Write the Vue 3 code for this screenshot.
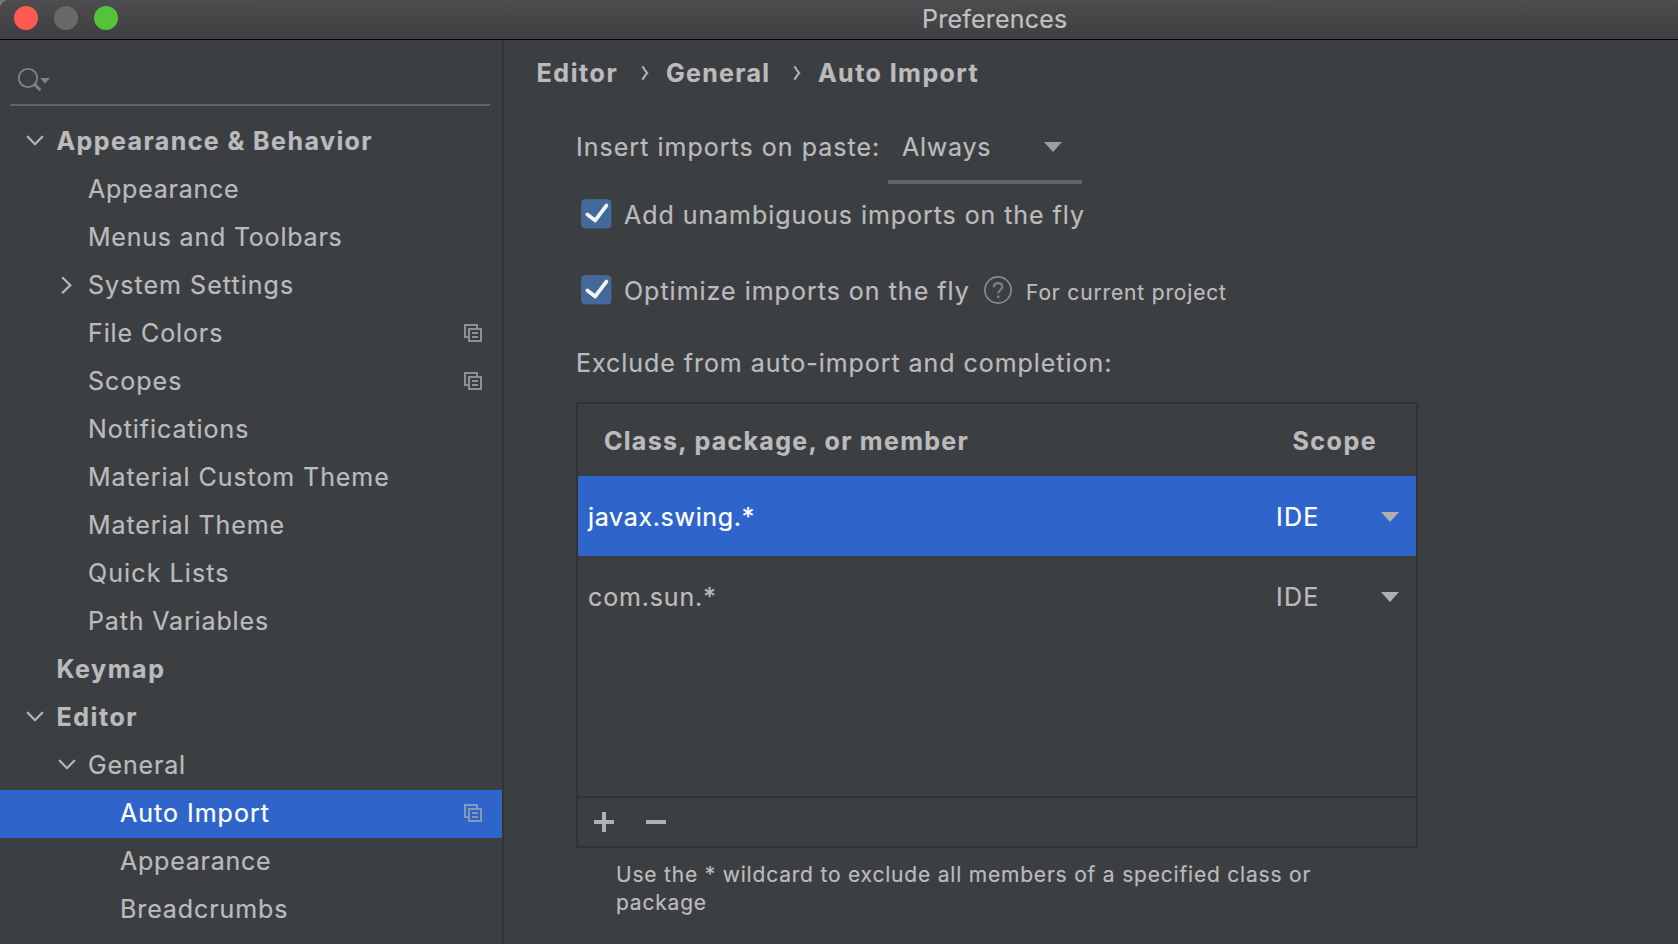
<script setup>
const tree = [
  { text: 'Appearance & Behavior', level: 0, bold: true, arrow: 'down', track: 1.44 },
  { text: 'Appearance', level: 1, track: 0.76 },
  { text: 'Menus and Toolbars', level: 1, track: 0.78 },
  { text: 'System Settings', level: 1, arrow: 'right', track: 1.05 },
  { text: 'File Colors', level: 1, copy: true, track: 0.9 },
  { text: 'Scopes', level: 1, copy: true, track: 1 },
  { text: 'Notifications', level: 1, track: 0.94 },
  { text: 'Material Custom Theme', level: 1, track: 0.93 },
  { text: 'Material Theme', level: 1, track: 0.92 },
  { text: 'Quick Lists', level: 1, track: 1.1 },
  { text: 'Path Variables', level: 1, track: 0.85 },
  { text: 'Keymap', level: 0, bold: true, track: 1.6 },
  { text: 'Editor', level: 0, bold: true, arrow: 'down', track: 1.6 },
  { text: 'General', level: 1, arrow: 'down', track: 0.85 },
  { text: 'Auto Import', level: 2, copy: true, selected: true, track: 1 },
  { text: 'Appearance', level: 2, track: 0.76 },
  { text: 'Breadcrumbs', level: 2, track: 0.9 },
]
const crumbs = ['Editor', 'General', 'Auto Import']
const options = [
  { text: 'Add unambiguous imports on the fly' },
  { text: 'Optimize imports on the fly', note: 'For current project' },
]
const rows = [
  { name: 'javax.swing.*', scope: 'IDE', selected: true },
  { name: 'com.sun.*', scope: 'IDE' },
]
</script>

<template>
  <div class="window">
    <header class="titlebar">
      <div class="lights">
        <i class="light close"></i>
        <i class="light minimize"></i>
        <i class="light zoom"></i>
      </div>
      <div class="title">Preferences</div>
    </header>

    <div class="body">
      <aside class="sidebar">
        <div class="search">
          <svg width="34" height="26" viewBox="0 0 34 26" fill="none">
            <circle cx="11" cy="12" r="9.2" stroke="#768690" stroke-width="1.8" />
            <path d="M16.8 17.8L23.3 24.3" stroke="#768690" stroke-width="3" />
            <path d="M23 12h10l-5 5.5z" fill="#768690" />
          </svg>
        </div>
        <ul class="tree">
          <li
            v-for="(item, i) in tree"
            :key="i"
            class="node"
            :class="{ bold: item.bold, selected: item.selected }"
            :style="{ paddingLeft: 24 + item.level * 32 + 'px', letterSpacing: item.track + 'px' }"
          >
            <svg class="twisty" width="32" height="48" viewBox="0 0 32 48" fill="none">
              <path v-if="item.arrow === 'down'" d="M3.7 18.7L11 26.2L18.3 18.7" />
              <path v-if="item.arrow === 'right'" d="M6.7 15.8L14.3 23.2L6.7 30.6" />
            </svg>
            <span class="label">{{ item.text }}</span>
            <svg v-if="item.copy" class="copy" width="18" height="18" viewBox="0 0 18 18" fill="none">
              <path d="M4 13H1V1h12v3M5 5h12v12H5zM8 9h6M8 13h6" />
            </svg>
          </li>
        </ul>
      </aside>

      <main class="content">
        <nav class="crumbs">
          <div v-for="(c, i) in crumbs" :key="c" class="crumb">
            <span>{{ c }}</span>
            <svg v-if="i < 2" width="8" height="16" viewBox="0 0 8 16" fill="none">
              <path d="M1.4 1.2C3 3.8 4.4 6.2 6.2 8C4.4 9.8 3 12.2 1.4 14.8" />
            </svg>
          </div>
        </nav>

        <div class="paste">
          <label>Insert imports on paste:</label>
          <div class="combo">
            <span>Always</span>
            <svg width="18" height="10" viewBox="0 0 18 10"><path d="M0 0h18l-9 10z" fill="#9b9fa2" /></svg>
          </div>
        </div>

        <div v-for="(o, i) in options" :key="o.text" class="option" :class="'option-' + i">
          <svg class="check" width="31" height="30" viewBox="0 0 31 30" fill="none">
            <rect x="0.8" y="0.8" width="29" height="28" rx="3" fill="#43699a" stroke="#486f9f" />
            <path d="M6.4 15.4L14.2 21.4L25.4 6.6" stroke="#f2f2f2" stroke-width="3.8" stroke-linecap="round" stroke-linejoin="round" />
          </svg>
          <span class="option-text">{{ o.text }}</span>
          <template v-if="o.note">
            <svg class="help" width="28" height="28" viewBox="0 0 28 28" fill="none">
              <circle cx="14" cy="14" r="13.1" stroke="#7f8d95" stroke-width="1.7" />
              <path d="M9.8 11.2C9.8 8.7 11.5 7.2 14 7.2S18.3 8.7 18.3 10.8C18.3 14 14.2 14 14.2 17.4" stroke="#73808a" stroke-width="2.2" />
              <path d="M12.9 19.6h2.6v2.5h-2.6z" fill="#73808a" />
            </svg>
            <span class="note">{{ o.note }}</span>
          </template>
        </div>

        <div class="caption">Exclude from auto-import and completion:</div>

        <section class="table">
          <div class="thead">
            <span>Class, package, or member</span>
            <span class="th-scope">Scope</span>
          </div>
          <div class="tbody">
            <div v-for="r in rows" :key="r.name" class="row" :class="{ selected: r.selected }">
              <span class="name">{{ r.name }}</span>
              <span class="scope">{{ r.scope }}</span>
              <svg width="18" height="10" viewBox="0 0 18 10"><path d="M0 0h18l-9 10z" fill="#afafb1" /></svg>
            </div>
          </div>
          <div class="toolbar">
            <svg width="20" height="20" viewBox="0 0 20 20"><path d="M8 0h4v8h8v4h-8v8H8v-8H0V8h8z" fill="#afb1b3" /></svg>
            <svg width="20" height="20" viewBox="0 0 20 20"><path d="M0 8h20v4H0z" fill="#afb1b3" /></svg>
          </div>
        </section>

        <p class="hint">Use the * wildcard to exclude all members of a specified class or package</p>
      </main>
    </div>
  </div>
</template>

<style>
body { background: #77787a; }
</style>

<style scoped>
.window {
  width: 1678px;
  height: 944px;
  overflow: hidden;
  display: flex;
  flex-direction: column;
  box-sizing: border-box;
  background: #3c3f42;
  border-top-left-radius: 9px;
  color: #bbbbbb;
  font: 400 25px/30px Inter, "Liberation Sans", sans-serif;
  letter-spacing: 1px;
  white-space: nowrap;
  -webkit-text-stroke: 0.2px currentColor;
}
svg { display: block; flex: none; }
.titlebar {
  flex: none;
  height: 40px;
  box-sizing: border-box;
  border-bottom: 1px solid #050505;
  background: linear-gradient(#4d4d4f, #3e3e40);
  display: flex;
}
.lights { display: flex; gap: 16px; padding: 6px 0 0 14px; width: 908px; box-sizing: border-box; }
.light { width: 24px; height: 24px; border-radius: 50%; }
.close { background: #ff5a52; }
.minimize { background: #69696a; }
.zoom { background: #54c33b; }
.title { padding-left: 14px; line-height: 38px; letter-spacing: 0.22px; color: #c0c0c1; }
.body { flex: 1; min-height: 0; display: flex; }
.sidebar {
  flex: none;
  width: 504px;
  box-sizing: border-box;
  border-right: 2px solid #333435;
}
.search {
  height: 66px;
  box-sizing: border-box;
  margin: 0 12px 12px 10px;
  border-bottom: 2px solid #646464;
  padding: 26px 0 0 7px;
}
.tree { list-style: none; margin: 0; padding: 0; }
.node { height: 48px; display: flex; padding-right: 20px; }
.twisty path { stroke: #b4b5b6; stroke-width: 2.2; stroke-linecap: round; }
.label { flex: 1; line-height: 46px; }
.bold { font-weight: 700; }
.bold .label { padding-left: 0.4px; }
.node.selected, .row.selected { background: #2f65ca; color: #ffffff; }
.copy { margin-top: 14px; opacity: 0.8; }
.copy path { stroke: #9aa7b0; stroke-width: 2; }
.content { flex: 1; padding: 18px 0 0 32px; }
.crumbs { display: grid; grid-template-columns: 130px 152px auto; font-weight: 700; letter-spacing: 1.45px; }
.crumb { display: flex; justify-content: space-between; padding-right: 17px; }
.crumb:first-child { letter-spacing: 1.6px; padding-left: 0.5px; }
.crumb:nth-child(2) { letter-spacing: 1.3px; }
.crumb svg { margin-top: 7px; }
.crumb path { stroke: #b4b4b4; stroke-width: 2; }
.paste { display: flex; margin: 26px 0 0 40px; height: 70px; line-height: 66px; letter-spacing: 1.02px; }
.paste label { width: 312px; }
.combo {
  width: 194px;
  box-sizing: border-box;
  border-bottom: 4px solid #646464;
  padding: 0 20px 0 14px;
  display: flex;
  justify-content: space-between;
  letter-spacing: 0.75px;
}
.combo svg { margin-top: 28px; }
.option { display: flex; height: 30px; margin-left: 45px; }
.option-0 { margin-top: 16px; letter-spacing: 0.94px; }
.option-1 { margin-top: 46px; }
.check { margin: -1px 12px 0 0; }
.option-text { width: 360px; }
.help { margin: 0 14px 0 0; }
.note { font-size: 21px; line-height: 33px; letter-spacing: 0.84px; }
.caption { margin: 42px 0 0 40px; letter-spacing: 0.95px; }
.table { width: 842px; box-sizing: border-box; margin: 24px 0 0 40px; border: 2px solid #323232; }
.thead {
  height: 70px;
  padding: 2px 0 0 26px;
  line-height: 70px;
  display: grid;
  grid-template-columns: 688px auto;
  font-weight: 700;
  letter-spacing: 1.3px;
}
.th-scope { padding-left: 0.5px; letter-spacing: 1.5px; }
.tbody { height: 320px; border-bottom: 2px solid #323232; }
.row {
  height: 80px;
  box-sizing: border-box;
  padding: 2px 17px 0 10px;
  line-height: 78px;
  display: flex;
}
.name { width: 688px; letter-spacing: 0.68px; }
.row:nth-child(2) .name { letter-spacing: 0.85px; }
.scope { flex: 1; letter-spacing: 1.2px; }
.row svg { margin-top: 34px; }
.toolbar { height: 48px; box-sizing: border-box; padding: 14px 0 0 16px; display: flex; gap: 32px; }
.hint {
  margin: 13px 0 0 80px;
  width: 740px;
  white-space: normal;
  font-size: 21px;
  line-height: 28px;
  letter-spacing: 0.8px;
}
</style>
